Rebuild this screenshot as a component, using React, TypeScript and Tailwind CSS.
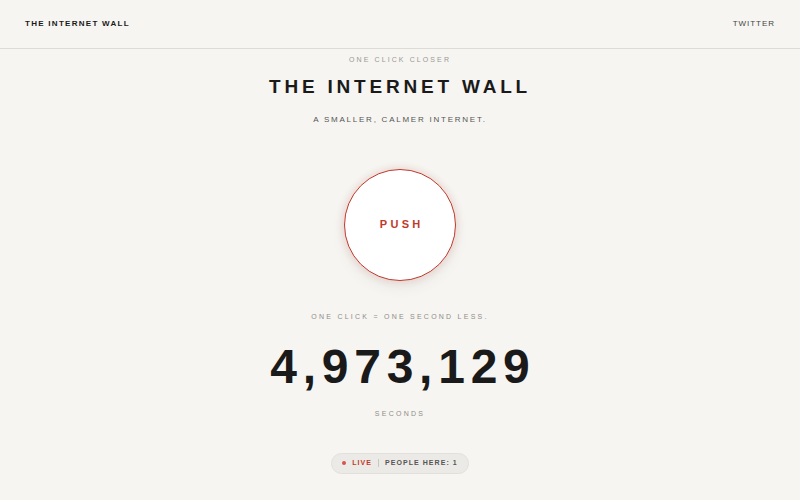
export default function App() {
  return (
    <div
      className="min-h-screen bg-[#f6f5f1] text-[#1a1a1a]"
      style={{ fontFamily: '"Liberation Sans", Arial, sans-serif' }}
    >
      <header className="flex h-[49px] items-center justify-between border-b border-[#dddbd6] px-[25px]">
        <span className="text-[8px] font-bold tracking-[0.16em]">THE INTERNET WALL</span>
        <span className="text-[8px] tracking-[0.12em] text-[#444]">TWITTER</span>
      </header>

      <main className="flex flex-col items-center">
        <p className="mt-[6px] text-[7px] tracking-[0.3em] text-[#9a9893]">ONE CLICK CLOSER</p>
        <h1 className="mt-[11px] text-[19px] font-bold leading-none tracking-[0.2em]">
          THE INTERNET WALL
        </h1>
        <p className="mt-[18px] text-[8px] tracking-[0.22em] text-[#555]">A SMALLER, CALMER INTERNET.</p>

        <button
          type="button"
          className="mt-[43px] flex h-[112px] w-[112px] items-center justify-center rounded-full border border-[#c0392b] bg-white shadow-[0_0_6px_2px_rgba(200,60,50,0.12),0_6px_16px_rgba(0,0,0,0.06)]"
        >
          <span className="pl-[0.3em] text-[11px] font-bold tracking-[0.3em] text-[#c0392b]">PUSH</span>
        </button>

        <p className="mt-[31px] text-[7px] tracking-[0.32em] text-[#8f8d88]">ONE CLICK = ONE SECOND LESS.</p>
        <div className="mt-[21px] pl-[0.12em] text-[48px] font-bold leading-none tracking-[0.12em]">4,973,129</div>
        <p className="mt-[18px] text-[7px] tracking-[0.32em] text-[#8f8d88]">SECONDS</p>

        <div className="mt-[33px] flex h-[21px] items-center gap-[6px] rounded-full border border-[#e2e0db] bg-[#eceae6] px-[10px] text-[7px] font-bold tracking-[0.15em]">
          <span className="h-[4px] w-[4px] rounded-full bg-[#d9534f]" />
          <span className="text-[#c0392b]">LIVE</span>
          <span className="h-[8px] w-px bg-[#c9c7c2]" />
          <span className="text-[#555]">PEOPLE HERE: 1</span>
        </div>
      </main>
    </div>
  )
}
